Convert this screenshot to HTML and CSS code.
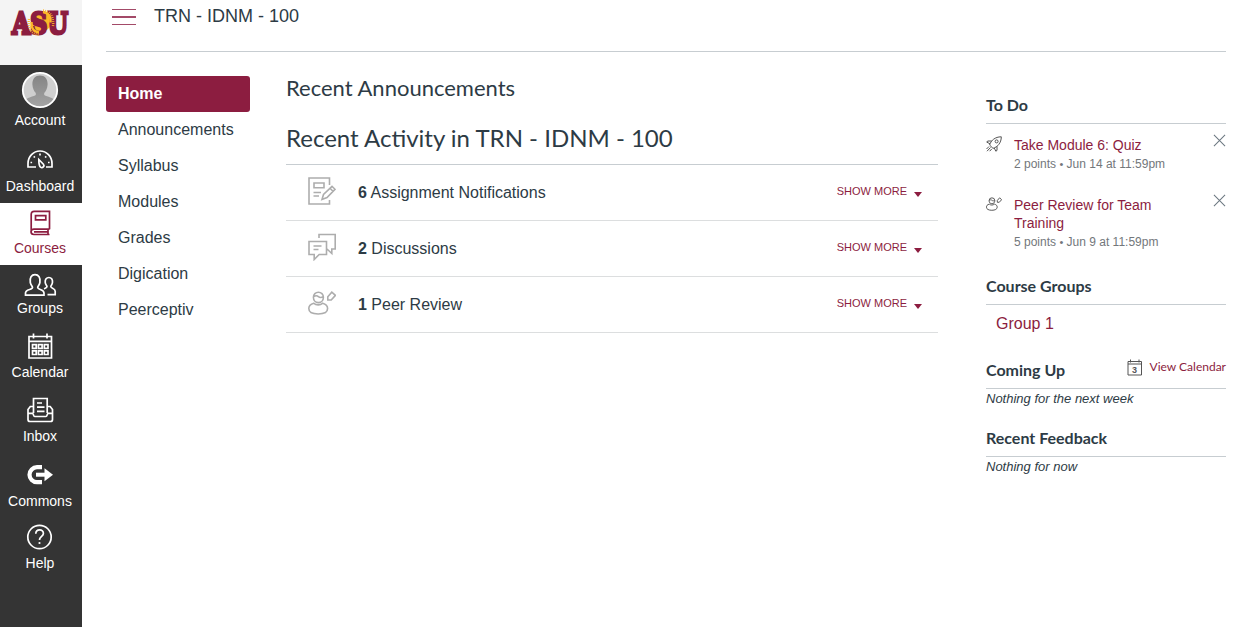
FILE: index.html
```
<!DOCTYPE html>
<html lang="en">
<head>
<meta charset="utf-8">
<title>TRN - IDNM - 100</title>
<link rel="stylesheet" href="styles.css">
</head>
<body>
<svg class="defs" aria-hidden="true">
  <symbol id="peer" viewBox="0 0 28 28">
    <path d="M5.400 8.200a5 5 0 0 1 10 0c0 3-2 5.400-5 5.400s-5-2.400-5-5.400zM5.600 7.600c2-1.200 3.400-1.200 4.800 0 1.400 1.200 3 1.200 4.800 0M5.800 14.200C2 15.200.8 17 .8 19.600.8 23 4.500 25 10.200 25s9.400-2 9.400-5.400c0-2.600-1.200-4.400-5-5.400-2.200 2.200-6.600 2.200-8.800 0zM19.800 11V7.800l4-4.600 3.600 3.200-4.200 4.600z"/>
  </symbol>
  <symbol id="close" viewBox="0 0 14 14"><path d="M1 1l12 12M13 1L1 13"/></symbol>
</svg>
<div class="app">
  <nav class="rail">
    <a class="logo">
      <svg width="62" height="30" viewBox="0 0 62 30" class="asu">
        <circle cx="31" cy="14" r="10" fill="#fdb827"/>
        <text x="2" y="25.500" class="letter" textLength="56" lengthAdjust="spacingAndGlyphs">ASU</text>
        <path class="glow" d="M21.500 14C21 20 24 24 29 24.500M33 4C38 5 41 8.500 40.500 14.500"/>
        <path class="rays" d="M19 11C17.500 20 21.500 26.500 29 26.500M33 2.500C40 3.500 44 8.500 43 18"/>
      </svg>
    </a>
    <a class="item account">
      <svg width="38" height="38" viewBox="0 0 38 38">
        <defs>
          <clipPath id="face"><circle cx="19" cy="19" r="17"/></clipPath>
          <linearGradient id="grey" x2="0" y2="1"><stop stop-color="#848484"/><stop offset="1" stop-color="#a6a6a6"/></linearGradient>
        </defs>
        <circle cx="19" cy="19" r="17" fill="#cfcfcf"/>
        <path clip-path="url(#face)" fill="url(#grey)" d="M19 4.500c5 0 7.800 3.500 7.600 9-.2 4-1.600 6.500-3.400 8.500v2c3 2 9.800 2 10.800 7v7H4v-7c1-5 7.800-5 10.800-7v-2c-1.800-2-3.200-4.500-3.400-8.500C11.200 8 14 4.500 19 4.500z"/>
        <circle cx="19" cy="19" r="17.200" fill="none" stroke="#fff" stroke-width="1.800"/>
      </svg>
      <span>Account</span>
    </a>
    <a class="item dashboard">
      <svg class="icon" viewBox="0 0 28 28">
        <path d="M10 22H2v-3.500a12 12.500 0 0 1 24 0V22h-6M12.800 14.500l4.600 4.700c1.600 2-.8 4.400-2.900 2.900-1.500-1.200-1.700-3.600-1.700-7.600zM14 8.500v2M7.700 11.300l1.200 1.200M20.300 11.300l-1.200 1.200M4.500 17.500h1.600M22 17.500h1.600"/>
      </svg>
      <span>Dashboard</span>
    </a>
    <a class="item courses active">
      <svg class="icon" viewBox="0 0 28 28">
        <path d="M23.500 20.200H8c-4 0-4 5.300 0 5.300h15.500M22 20.200v5.300M8 22.900h14M5.200 23V5.500c0-2 1-3.200 3-3.200h15.300v18M9.500 6.700h10.300v4.200H9.500z"/>
      </svg>
      <span>Courses</span>
    </a>
    <a class="item groups">
      <svg class="icon wide" viewBox="0 0 34 28">
        <path d="M9.500 16.500c0-1.500-1.700-2-2.200-5C6.500 6.500 8.500 3.700 12 3.700s5.700 2.800 4.900 7.800c-.5 3-2.200 3.500-2.200 5 0 2.500 6.300 1.500 6.300 5.500v2.200H2.500V22c0-4 7-3 7-5.500zM21 17.800c1.500-.6 3-.8 3-2.300 0-1.200-1.600-1.700-1.800-4.200-.2-3 1.300-4.800 3.700-4.800s3.800 1.800 3.600 4.800c-.2 2.500-1.700 3-1.700 4.200 0 2 4.400 1.500 4.400 4.700v3.500H24.500"/>
      </svg>
      <span>Groups</span>
    </a>
    <a class="item calendar">
      <svg class="icon" viewBox="0 0 28 28">
        <path d="M3 4.500h22.500v21.500H3zM3 9.300h22.500M7.500 1.500v5M21 1.500v5M6.500 12.600h3.700v3.700H6.500zM12.400 12.600h3.700v3.700h-3.700zM18.300 12.600H22v3.700h-3.700zM6.500 18.800h3.700v3.700H6.500zM12.400 18.800h3.700v3.700h-3.700zM18.300 18.800H22v3.700h-3.700z"/>
      </svg>
      <span>Calendar</span>
    </a>
    <a class="item inbox">
      <svg class="icon" viewBox="0 0 28 28">
        <path d="M7.500 17V2.500h13.700V17M11 7h5M11 11.200h7.500M11 15.400h7.500M7.500 10.500H4.300L2 13.500v10c0 1.200.8 2 2 2h20.500c1.200 0 2-.8 2-2v-10l-2.300-3h-3M2 17.300h4.500c1 0 .8 3.200 2.200 3.200h11.200c1.400 0 1.200-3.200 2.200-3.200h4.400"/>
      </svg>
      <span>Inbox</span>
    </a>
    <a class="item commons">
      <svg class="icon" viewBox="0 0 28 28">
        <path d="M16 6.200h-5a7.500 7.500 0 0 0 0 15h5" stroke-width="4.200"/>
        <path d="M10 13.700h9" stroke-width="4"/>
        <path d="M18.500 7.200l8.500 6.500-8.500 6.500z" fill="currentColor" stroke="none"/>
      </svg>
      <span>Commons</span>
    </a>
    <a class="item help">
      <svg class="icon" viewBox="0 0 28 28">
        <circle cx="13.500" cy="14" r="11.700"/>
        <path d="M9.800 10.800c0-5.200 8-5 7.600-.2-.3 2.900-3.900 2.700-3.900 6.400"/>
        <circle cx="13.500" cy="20" r="1.100" fill="currentColor" stroke="none"/>
      </svg>
      <span>Help</span>
    </a>
  </nav>

  <div class="page">
    <header class="top">
      <button class="burger" aria-label="Course menu"><i></i><i></i><i></i></button>
      <span class="crumb">TRN - IDNM - 100</span>
    </header>
    <div class="columns">
      <nav class="sections">
        <a class="current">Home</a>
        <a>Announcements</a>
        <a>Syllabus</a>
        <a>Modules</a>
        <a>Grades</a>
        <a>Digication</a>
        <a>Peerceptiv</a>
      </nav>

      <main class="main">
        <h3>Recent Announcements</h3>
        <h2>Recent Activity in TRN - IDNM - 100</h2>
        <ul class="activity">
          <li>
            <svg class="kind" viewBox="0 0 28 28"><path d="M21.500 8V1H1v26h20.500v-4M6 6h10v4.800H6zM5.500 15.500H13M5.500 19H11M14 22.500l1.500-5L24 9.300l3 3-8 8.200zM22 11.300l3 3"/></svg>
            <span class="what"><b>6</b> Assignment Notifications</span>
            <a class="more">SHOW MORE<i></i></a>
          </li>
          <li>
            <svg class="kind" viewBox="0 0 28 28"><path d="M11 5V1.500h16.200V16h-3.400v4.500L19 16M1 8.500h17.500v13h-7.300l-5 5v-5H1zM5.500 13h8M5.500 16.500h5"/></svg>
            <span class="what"><b>2</b> Discussions</span>
            <a class="more">SHOW MORE<i></i></a>
          </li>
          <li>
            <svg class="kind"><use href="#peer"/></svg>
            <span class="what"><b>1</b> Peer Review</span>
            <a class="more">SHOW MORE<i></i></a>
          </li>
        </ul>
      </main>

      <aside class="side">
        <h4>To Do</h4>
        <div class="todo">
          <svg class="mark" viewBox="0 0 16 16"><path d="M3.600 9C5 4.500 9 .8 15.300.8 15.300 7 11.500 11 7 12.400zM5.800 5H1.600L.8 6.200l3.400 1.600M11 10.200v4.200l-1.200.8-1.600-3.400M3 10.500L.5 13M4.500 11.500L1 15.200M5.700 13l-2 2.200"/><circle cx="10.600" cy="5.400" r="1.500"/></svg>
          <div class="task">
            <a>Take Module 6: Quiz</a>
            <p>2 points <small>•</small> Jun 14 at 11:59pm</p>
          </div>
          <svg class="close"><use href="#close"/></svg>
        </div>
        <div class="todo second">
          <svg class="mark peer"><use href="#peer"/></svg>
          <div class="task">
            <a>Peer Review for Team Training</a>
            <p>5 points <small>•</small> Jun 9 at 11:59pm</p>
          </div>
          <svg class="close"><use href="#close"/></svg>
        </div>
        <h4 class="groups-title">Course Groups</h4>
        <a class="group">Group 1</a>
        <div class="coming">
          <h4>Coming Up</h4>
          <a class="view">
            <svg width="16" height="17" viewBox="0 0 16 17"><path d="M1 2.500h13.500V16H1zM1 5h13.500M3.500.5v3M12 .5v3"/><text x="5" y="13.800" class="day">3</text></svg>
            <span>View Calendar</span>
          </a>
        </div>
        <p class="none">Nothing for the next week</p>
        <h4 class="feedback">Recent Feedback</h4>
        <p class="none">Nothing for now</p>
      </aside>
    </div>
  </div>
</div>
</body>
</html>
```

FILE: styles.css
```
* { box-sizing: border-box; }
body {
  margin: 0;
  background: #fff;
  color: #2d3b45;
  font: 16px/24px "Liberation Sans", Arial, sans-serif;
}
h2, h3, h4, p, ul { margin: 0; padding: 0; font-weight: 400; }
.defs { position: absolute; width: 0; height: 0; }
.app { display: flex; height: 627px; overflow: hidden; }
svg { flex: none; fill: none; stroke: currentColor; }

.rail { width: 82px; flex: none; background: #343434; color: #fff; }
.logo { display: block; height: 65px; padding: 8px 0 0 10px; background: #f4f4f4; }
.asu { display: block; overflow: visible; stroke: none; }
.letter {
  fill: #8c1d40;
  stroke: #8c1d40;
  stroke-width: 3px;
  font: bold 30px "DejaVu Serif", serif;
}
.glow { stroke: #fdb827; stroke-width: 2.500px; }
.rays { stroke: #fdb827; stroke-width: 2.500px; stroke-dasharray: .8 1.200; }
.item {
  display: flex;
  flex-direction: column;
  align-items: center;
  justify-content: flex-end;
  height: 64px;
  padding: 0 2px 8px 0;
  font-size: 14px;
  line-height: 18px;
}
.item svg { margin-bottom: 3px; }
.icon { width: 28px; height: 28px; stroke-width: 1.7px; }
.icon.wide { width: 34px; }
.item.account { height: 72px; }
.item.account svg { margin-bottom: 2px; stroke: none; }
.item.dashboard { height: 66px; }
.item.dashboard svg { margin-bottom: 4px; }
.item.courses { height: 62px; }
.item.courses svg { margin-bottom: 2px; }
.item.groups { height: 60px; }
.item.groups svg { margin-bottom: 0; }
.item.commons { height: 65px; }
.item.help { height: 62px; }
.item.active { background: #fff; color: #8c1d40; }

.page { flex: 1; padding: 0 9px 0 24px; }
.top {
  display: flex;
  align-items: flex-start;
  height: 52px;
  padding: 4px 0 0 6px;
  border-bottom: 1px solid #c7cdd1;
}
.burger {
  display: flex;
  flex-direction: column;
  gap: 6px;
  width: 24px;
  margin: 5px 18px 0 0;
  padding: 0;
  border: 0;
  background: none;
}
.burger i { height: 1.400px; min-height: 1px; background: #a34a68; }
.crumb { font-size: 18px; }

.columns { display: flex; }
.sections { display: flex; flex-direction: column; width: 144px; margin: 24px 36px 0 0; }
.sections a { height: 36px; padding-left: 12px; line-height: 36px; }
.sections .current { background: #8c1d40; border-radius: 3px; color: #fff; font-weight: 700; }

.main { width: 652px; margin-right: 48px; padding-top: 19px; }
h2, h3, h4, .view { font-family: Lato, sans-serif; }
h3 { font-size: 22px; line-height: 34px; }
h2 { height: 60px; padding-top: 15px; font-size: 24px; line-height: 36px; border-bottom: 1px solid #c7cdd1; }
.activity { list-style: none; }
.activity li {
  display: flex;
  align-items: flex-start;
  height: 56px;
  padding: 12px 16px 0 22px;
  border-bottom: 1px solid #dcdedf;
}
.kind { width: 28px; height: 28px; margin-right: 22px; color: #adadad; stroke-width: 1.600px; }
.what { flex: 1; padding-top: 4px; }
.more { display: flex; font-size: 11px; line-height: 29px; color: #8c1d40; }
.more i {
  width: 0;
  height: 0;
  margin: 15px 0 0 7px;
  border: 4px solid transparent;
  border-top: 5px solid #8c1d40;
  border-bottom: 0;
}

.side { width: 240px; padding-top: 41px; }
.side h4 {
  height: 31px;
  font-size: 16px;
  line-height: 24px;
  font-weight: 700;
  border-bottom: 1px solid #c7cdd1;
}
.todo { display: flex; align-items: flex-start; padding-top: 12px; }
.todo.second { padding-top: 22px; }
.mark { width: 16px; height: 16px; margin-right: 12px; color: #555; stroke-width: 1px; }
.mark.peer { stroke-width: 1.700px; }
.task { width: 160px; font-size: 14px; line-height: 18px; color: #8c1d40; }
.task p { height: 20px; font-size: 12px; line-height: 20px; color: #73777b; }
.task small { font-size: 11px; line-height: 1; }
.close { width: 13px; height: 13px; margin: -2px 0 0 auto; color: #6b7780; stroke-width: 1.100px; }
.side .groups-title { margin-top: 22px; }
.group { display: block; padding: 7px 0 0 10px; color: #8c1d40; }
.coming { display: flex; justify-content: space-between; margin-top: 22px; border-bottom: 1px solid #c7cdd1; }
.side .coming h4 { border: 0; height: 30px; }
.view { display: flex; gap: 7px; font-size: 12px; line-height: 17px; color: #8c1d40; }
.view svg { margin-top: 1px; color: #555; }
.day { fill: #555; stroke: none; font: bold 9px "Liberation Sans", sans-serif; }
.none { font-size: 13px; line-height: 20px; font-style: italic; }
.side .feedback { margin-top: 17px; }
```
